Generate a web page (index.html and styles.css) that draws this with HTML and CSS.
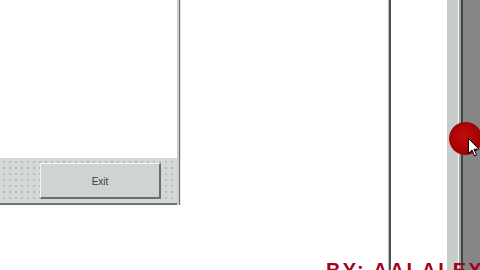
FILE: index.html
```html
<!DOCTYPE html>
<html>
<head>
<meta charset="utf-8">
<link rel="stylesheet" href="styles.css">
</head>
<body>
<div class="screen">
  <div class="panel">
    <div class="panel-body"></div>
    <div class="panel-footer">
      <button class="btn">Exit</button>
    </div>
  </div>
  <div class="gap1"></div>
  <div class="vline"></div>
  <div class="gap2"></div>
  <div class="scroll">
    <div class="s1"></div>
    <div class="s2"></div>
    <div class="s3"></div>
    <div class="s4"></div>
    <div class="s5"></div>
  </div>
  <div class="click"></div>
  <svg class="cursor" width="12" height="19" viewBox="0 0 12 19">
    <path d="M0.5 0.5 L0.5 15.5 L4 12 L6.5 18 L8.5 17 L6 11.2 L11 11.2 Z" fill="#fff" stroke="#000" stroke-width="1"/>
  </svg>
  <div class="credit">BY: AAI ALEX</div>
</div>
</body>
</html>
```

FILE: styles.css
```css
html, body {
  margin: 0;
  padding: 0;
  background: #fff;
}
.screen {
  position: relative;
  width: 480px;
  height: 270px;
  overflow: hidden;
  display: flex;
  align-items: flex-start;
  background: #fff;
}
.panel {
  width: 177px;
  flex: none;
  display: flex;
  flex-direction: column;
  border-right: 2px solid #c9cfcd;
  box-shadow: 1px 0 0 #6d716f, 2px 0 0 #e6e8e7;
  margin-right: 2px;
}
.panel-body {
  height: 158px;
  background: #fff;
}
.panel-footer {
  height: 45px;
  background-color: #d3d9d6;
  background-image: radial-gradient(circle, #b6bdba 0.9px, transparent 1.2px);
  background-size: 6px 6px;
  background-position: 1px 1px;
  display: flex;
  align-items: center;
  padding-left: 40px;
  border-bottom: 2px solid #6f7472;
}
.btn {
  width: 121px;
  height: 36px;
  margin: 0;
  padding: 2px 0 0 0;
  background: #cdd4d1;
  border-top: 1px solid #f4f6f5;
  border-left: 1px solid #f4f6f5;
  border-right: 2px solid #6a6f6d;
  border-bottom: 2px solid #6a6f6d;
  font-family: "Liberation Sans", Arial, sans-serif;
  font-size: 10px;
  color: #3a3d3c;
}
.gap1 {
  width: 208px;
  flex: none;
}
.vline {
  width: 2px;
  height: 270px;
  flex: none;
  background: #4f5351;
  box-shadow: -1px 0 0 #b9bdbb;
}
.gap2 {
  width: 56px;
  flex: none;
}
.scroll {
  flex: none;
  display: flex;
  height: 270px;
}
.s1 { width: 11px; background: #c6cecb; }
.s2 { width: 1px; background: #f2f4f3; }
.s3 { width: 2px; background: #9ea3a1; }
.s4 { width: 2px; background: #3f4341; }
.s5 { width: 20px; background: #858786; }
.click {
  position: absolute;
  left: 449px;
  top: 122px;
  width: 33px;
  height: 33px;
  border-radius: 50%;
  background: radial-gradient(circle at 45% 45%, #c20c0c, #9e0000 70%);
}
.cursor {
  position: absolute;
  left: 468px;
  top: 138px;
}
.credit {
  position: absolute;
  left: 326px;
  top: 259px;
  font-family: "Liberation Sans", Arial, sans-serif;
  font-weight: bold;
  font-size: 20px;
  line-height: 22px;
  color: #a8001a;
  letter-spacing: 2.3px;
  white-space: nowrap;
}
```
